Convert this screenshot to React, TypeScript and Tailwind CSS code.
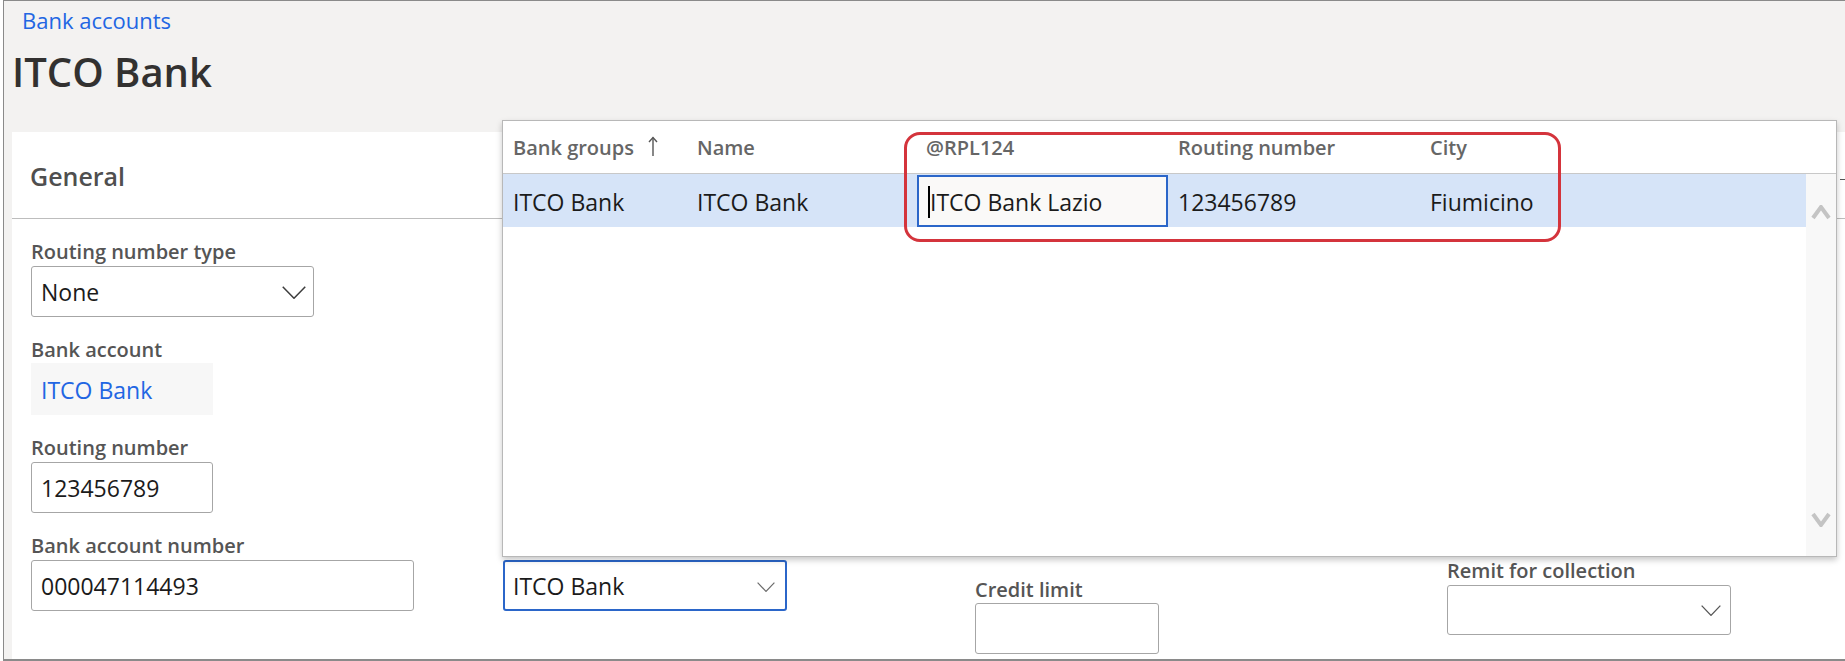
import React from "react";

function Chevron({ w, h, color, sw }: { w: number; h: number; color: string; sw: number }) {
  return (
    <svg width={w} height={h} viewBox={`0 0 ${w} ${h}`} fill="none" className="shrink-0">
      <polyline
        points={`${sw / 2},${sw / 2} ${w / 2},${h - sw / 2} ${w - sw / 2},${sw / 2}`}
        stroke={color}
        strokeWidth={sw}
        strokeLinejoin="miter"
      />
    </svg>
  );
}

function ChevronUp({ w, h, color, sw }: { w: number; h: number; color: string; sw: number }) {
  return (
    <svg width={w} height={h} viewBox={`0 0 ${w} ${h}`} fill="none" className="shrink-0">
      <polyline
        points={`${sw / 2},${h - sw / 2} ${w / 2},${sw / 2} ${w - sw / 2},${h - sw / 2}`}
        stroke={color}
        strokeWidth={sw}
      />
    </svg>
  );
}

function Label({ children, className = "" }: { children: React.ReactNode; className?: string }) {
  return (
    <div className={"h-[26px] whitespace-nowrap text-[20px] font-semibold leading-[30px] text-[#555555] " + className}>
      {children}
    </div>
  );
}

export default function App() {
  return (
    <div className="relative h-[661px] w-[1845px] overflow-hidden bg-white pl-[3px] font-['Open_Sans',sans-serif]">
      <div className="flex h-full flex-col border-b-2 border-l border-t border-[#8a8a8a] bg-[#f3f2f1]">
        {/* page header */}
        <div className="h-[131px] shrink-0 pl-[6px] pt-[4px]">
          <div className="ml-[12px] whitespace-nowrap text-[22px] leading-[30px] text-[#2266e3]">Bank accounts</div>
          <div className="ml-[2px] mt-[9px] whitespace-nowrap text-[40px] font-semibold leading-[56px] text-[#323130]">ITCO Bank</div>
        </div>

        {/* card */}
        <div className="ml-[8px] flex flex-1 flex-col bg-white">
          <div className="flex h-[87px] shrink-0 border-b border-[#bdbdbd]">
            <div className="flex items-center pl-[18px] pt-[4px] text-[25px] font-semibold text-[#4f4f4f]">General</div>
            <div className="ml-auto mt-[47px] h-[1px] w-[5px] bg-[#555555]" />
          </div>

          <div className="flex pl-[19px] text-[#1b1b1b]">
            {/* column 1 */}
            <div className="w-[472px] shrink-0 pt-[18px]">
              <Label>Routing number type</Label>
              <div className="mt-[3px] flex h-[51px] w-[283px] items-center justify-between rounded-[3px] border border-[#a6a6a6] pl-[9px] pr-[7px] pt-[2px] text-[23px]">
                <span>None</span>
                <Chevron w={24} h={13} color="#3d3d3d" sw={1.5} />
              </div>
              <Label className="mt-[18px]">Bank account</Label>
              <div className="mt-[2px] flex h-[52px] w-[182px] items-center bg-[#f7f7f7] pl-[10px] pt-[2px] text-[23px] text-[#2266e3]">
                ITCO Bank
              </div>
              <Label className="mt-[18px]">Routing number</Label>
              <div className="mt-[3px] flex h-[51px] w-[182px] items-center rounded-[3px] border border-[#a6a6a6] pl-[9px] pt-[2px] text-[23px]">
                123456789
              </div>
              <Label className="mt-[18px]">Bank account number</Label>
              <div className="mt-[3px] flex h-[51px] w-[383px] items-center rounded-[3px] border border-[#a6a6a6] pl-[9px] pt-[2px] text-[23px]">
                000047114493
              </div>
            </div>

            {/* column 2 */}
            <div className="w-[472px] shrink-0 pt-[341px]">
              <div className="flex h-[51px] w-[284px] items-center justify-between rounded-[3px] border-2 border-[#2b66c9] pl-[8px] pr-[10px] pt-[2px] text-[23px]">
                <span>ITCO Bank</span>
                <Chevron w={18} h={10} color="#6b6b6b" sw={1.2} />
              </div>
            </div>

            {/* column 3 */}
            <div className="w-[472px] shrink-0 pt-[356px]">
              <Label>Credit limit</Label>
              <div className="mt-[2px] h-[51px] w-[184px] rounded-[3px] border border-[#a6a6a6]" />
            </div>

            {/* column 4 */}
            <div className="w-[472px] shrink-0 pt-[337px]">
              <Label>Remit for collection</Label>
              <div className="mt-[3px] flex h-[50px] w-[284px] items-center justify-end rounded-[3px] border border-[#a6a6a6] pr-[9px]">
                <Chevron w={20} h={11} color="#555555" sw={1.3} />
              </div>
            </div>
          </div>
        </div>
      </div>

      {/* lookup popup */}
      <div className="absolute left-[502px] top-[120px] flex h-[437px] w-[1335px] flex-col border border-[#b8b8b8] bg-white shadow-[0_3px_6px_rgba(0,0,0,0.22)]">
        <div className="flex h-[53px] shrink-0 items-center whitespace-nowrap border-b border-[#c8c8c8] pt-[1px] text-[20px] font-semibold text-[#666666]">
          <div className="flex w-[194px] items-center pl-[10px]">
            <span>Bank groups</span>
            <svg width="10" height="20" viewBox="0 0 10 20" fill="none" className="ml-[14px] mb-[4px]">
              <line x1="5" y1="1.5" x2="5" y2="20" stroke="#555555" strokeWidth="1.4" />
              <polyline points="1,6 5,1.5 9,6" stroke="#555555" strokeWidth="1.4" />
            </svg>
          </div>
          <div className="w-[220px]">Name</div>
          <div className="w-[261px] pl-[9px]">@RPL124</div>
          <div className="w-[252px]">Routing number</div>
          <div>City</div>
        </div>
        <div className="flex flex-1">
          <div className="flex-1">
            <div className="flex h-[53px] items-end whitespace-nowrap bg-[#d6e4f8] text-[23px] text-[#1b1b1b]">
              <div className="flex h-full w-[194px] items-center pl-[10px] pt-[3px]">ITCO Bank</div>
              <div className="flex h-full w-[220px] items-center pt-[3px]">ITCO Bank</div>
              <div className="w-[261px]">
                <div className="flex h-[52px] w-[251px] items-center border-2 border-[#2b66c9] bg-[#faf9f8] pl-[9px] pt-[2px]">
                  <span className="h-[32px] w-[2px] bg-black" />
                  <span>ITCO Bank Lazio</span>
                </div>
              </div>
              <div className="flex h-full w-[252px] items-center pt-[3px]">123456789</div>
              <div className="flex h-full items-center pt-[3px]">Fiumicino</div>
            </div>
          </div>
          <div className="flex w-[30px] flex-col items-center justify-between bg-[#f8f8f8] pb-[29px] pt-[31px]">
            <ChevronUp w={20} h={15} color="#c4c4c4" sw={4} />
            <Chevron w={20} h={15} color="#c4c4c4" sw={4} />
          </div>
        </div>
      </div>

      {/* red annotation */}
      <div className="absolute left-[904px] top-[132px] h-[110px] w-[657px] rounded-[16px] border-[3px] border-[#d4343c]" />
    </div>
  );
}
